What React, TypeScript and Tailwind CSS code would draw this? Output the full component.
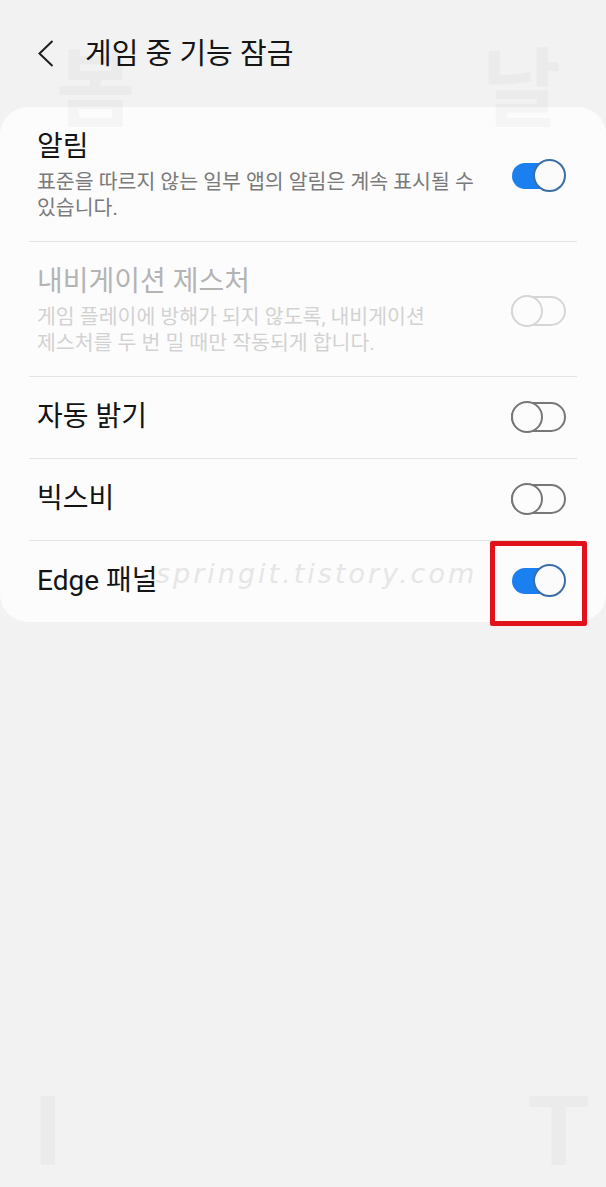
/**
 * Game mode — "게임 중 기능 잠금" settings screen (One UI style list card).
 */

type Item = {
  title: string;
  lines?: string[];
  on: boolean;
  disabled?: boolean;
  marked?: boolean;
};

const items: Item[] = [
  {
    title: "알림",
    lines: ["표준을 따르지 않는 일부 앱의 알림은 계속 표시될 수", "있습니다."],
    on: true,
  },
  {
    title: "내비게이션 제스처",
    lines: ["게임 플레이에 방해가 되지 않도록, 내비게이션", "제스처를 두 번 밀 때만 작동되게 합니다."],
    on: false,
    disabled: true,
  },
  { title: "자동 밝기", on: false },
  { title: "빅스비", on: false },
  { title: "Edge 패널", on: true, marked: true },
];

function Toggle({ on, disabled }: { on: boolean; disabled?: boolean }) {
  if (on) {
    return (
      <div className="relative w-[55px] h-[34px] flex items-center">
        <div className="w-[52px] h-[26px] ml-[1px] rounded-full bg-[#1a80f0]" />
        <div className="absolute right-0 top-0 w-[33px] h-[33px] rounded-full bg-[#fbfbfb] border-2 border-[#3a6ea6]" />
      </div>
    );
  }
  const stroke = disabled ? "border-[#d6d6d6]" : "border-[#777777]";
  return (
    <div className="relative w-[55px] h-[34px] flex items-center">
      <div className={`w-[55px] h-[30px] rounded-full border-2 ${stroke}`} />
      <div className={`absolute left-0 top-[1px] w-[32px] h-[32px] rounded-full bg-[#fcfcfc] border-2 ${stroke}`} />
    </div>
  );
}

function Row({ item, first }: { item: Item; first: boolean }) {
  const hasSub = !!item.lines;
  return (
    <div
      className={`flex items-center pl-[8px] pr-[11px] ${first ? "" : "border-t border-[#e3e3e3]"} ${
        hasSub ? "pt-[23px] pb-[20px]" : "pt-[23px] pb-[24px]"
      }`}
    >
      <div className="flex-1 min-w-0">
        <div
          className={`text-[28px] leading-[34px] whitespace-nowrap ${
            item.disabled ? "text-[#b4b4b4]" : "text-[#141414]"
          }`}
        >
          {item.title}
        </div>
        {item.lines && (
          <div
            className={`mt-[5px] text-[20.5px] leading-[26px] whitespace-nowrap ${
              item.disabled ? "text-[#d2d2d2]" : "text-[#7a7a7a]"
            }`}
          >
            {item.lines[0]}
            <br />
            {item.lines[1]}
          </div>
        )}
      </div>
      <div className="relative shrink-0">
        <Toggle on={item.on} disabled={item.disabled} />
        {item.marked && (
          <span className="absolute -left-[21px] -right-[21px] -top-[23px] -bottom-[28px] border-[5px] border-[#e2121c] rounded-[2px] pointer-events-none" />
        )}
      </div>
    </div>
  );
}

export default function App() {
  return (
    <div className="relative w-full h-[1187px] overflow-hidden bg-[#f2f2f2] font-[family-name:Roboto,'Noto_Sans_CJK_KR',sans-serif]">
      {/* ─── Header ─── */}
      <header className="h-[107px] flex items-center pl-[38px]">
        <svg width="16" height="27" viewBox="0 0 16 27" className="shrink-0">
          <polyline points="14.5,1 1.5,13.5 14.5,26" fill="none" stroke="#1e1e1e" strokeWidth="2" />
        </svg>
        <h1 className="ml-[31px] text-[29px] leading-[38px] text-[#151515] font-normal whitespace-nowrap">
          게임 중 기능 잠금
        </h1>
      </header>

      {/* ─── Settings card ─── */}
      <div className="rounded-[28px] bg-[#fcfcfc] px-[29px]">
        {items.map((item, i) => (
          <Row key={item.title} item={item} first={i === 0} />
        ))}
      </div>

      {/* ─── Faint watermarks ─── */}
      <span className="absolute left-[56px] top-[28px] text-[86px] leading-[110px] font-bold text-black/[0.028] pointer-events-none font-['Noto_Sans_CJK_KR',sans-serif]">
        봄
      </span>
      <span className="absolute left-[482px] top-[28px] text-[86px] leading-[110px] font-bold text-black/[0.028] pointer-events-none font-['Noto_Sans_CJK_KR',sans-serif]">
        날
      </span>
      <span className="absolute left-[34px] top-[1080px] text-[100px] leading-[100px] font-bold text-black/[0.028] pointer-events-none font-['Liberation_Sans',sans-serif]">
        I
      </span>
      <span className="absolute left-[528px] top-[1080px] text-[100px] leading-[100px] font-bold text-black/[0.028] pointer-events-none font-['Liberation_Sans',sans-serif]">
        T
      </span>
      <span className="absolute left-[156px] top-[556px] text-[27px] leading-[36px] italic font-extralight tracking-[3px] text-[#e6e6e6] pointer-events-none font-['DejaVu_Sans',sans-serif]">
        springit.tistory.com
      </span>
    </div>
  );
}
